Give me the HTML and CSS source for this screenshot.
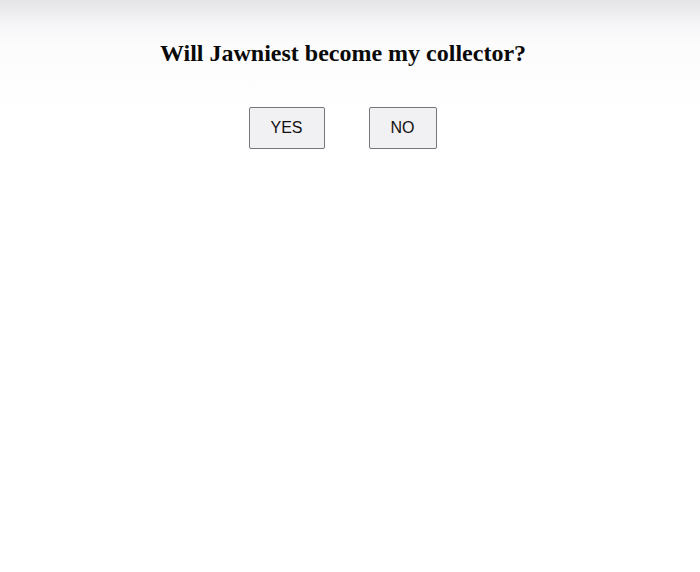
FILE: index.html
```html
<!DOCTYPE html>
<html lang="en">
<head>
    <meta charset="UTF-8">
    <meta name="viewport" content="width=device-width, initial-scale=1.0">
    <title>Collector</title>
    <link rel="stylesheet" href="styles.css">
</head>
<body>
    <div class="container">
        <h2 class="question">Will Jawniest become my collector?</h2>
        <div class="answers">
            <button class="answer">YES</button>
            <button class="answer">NO</button>
        </div>
    </div>
</body>
</html>
```

FILE: styles.css
```css
body {
    margin: 0;
    min-height: 100vh;
    background: linear-gradient(180deg, #e4e3e6 0px, #f6f5f7 25px, #fdfcfd 45px, #ffffff 120px);
    font-family: 'Liberation Serif', 'Times New Roman', serif;
}
.container {
    width: 686px;
    padding-top: 40px;
    text-align: center;
}
.question {
    margin: 0;
    font-size: 24px;
    font-weight: bold;
    color: #0a0a0a;
}
.answers {
    display: flex;
    justify-content: center;
    gap: 44px;
    margin-top: 40px;
}
.answer {
    font-family: 'Liberation Sans', Arial, sans-serif;
    font-size: 16px;
    color: #111;
    background: #f1f0f2;
    border: 1px solid #76757a;
    border-radius: 2px;
    padding: 11px 21px;
    line-height: 18px;
    cursor: pointer;
}
.answer:first-child {
    padding-left: 20px;
}
```
